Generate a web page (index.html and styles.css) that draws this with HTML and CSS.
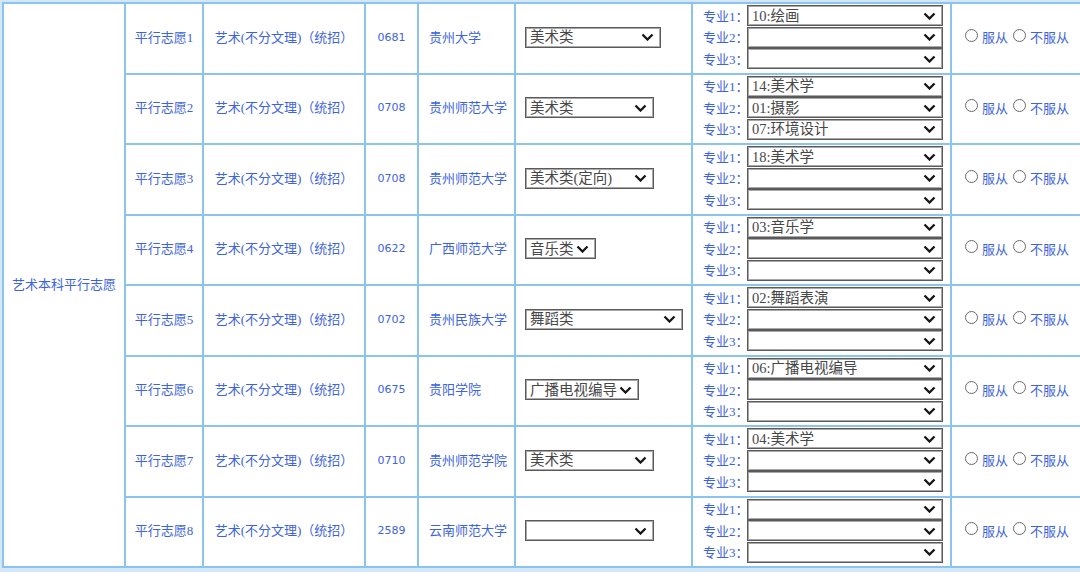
FILE: index.html
```html
<!DOCTYPE html>
<html lang="zh-CN">
<head>
  <meta charset="UTF-8">
  <title>艺术本科平行志愿</title>
  <link rel="stylesheet" href="styles.css">
</head>
<body>

<table class="plan">
  <colgroup>
    <col class="col-batch">
    <col class="col-no">
    <col class="col-type">
    <col class="col-code">
    <col class="col-school">
    <col class="col-prog">
    <col class="col-major">
    <col class="col-obey">
  </colgroup>

  <tr>
    <td rowspan="8" class="center">艺术本科平行志愿</td>
    <td class="center">平行志愿1</td>
    <td class="center">艺术(不分文理)（统招）</td>
    <td class="center code">0681</td>
    <td class="school">贵州大学</td>
    <td class="prog"><span class="sel w135"><select><option>美术类</option></select><svg class="chev" viewBox="0 0 13 8"><path d="M1.5 1.5 6.5 6.5 11.5 1.5"/></svg></span></td>
    <td class="majors">
      <div class="mrow"><span class="lab">专业1：</span><span class="sel major"><select><option>10:绘画</option></select><svg class="chev" viewBox="0 0 13 8"><path d="M1.5 1.5 6.5 6.5 11.5 1.5"/></svg></span></div>
      <div class="mrow"><span class="lab">专业2：</span><span class="sel major"><select><option></option></select><svg class="chev" viewBox="0 0 13 8"><path d="M1.5 1.5 6.5 6.5 11.5 1.5"/></svg></span></div>
      <div class="mrow"><span class="lab">专业3：</span><span class="sel major"><select><option></option></select><svg class="chev" viewBox="0 0 13 8"><path d="M1.5 1.5 6.5 6.5 11.5 1.5"/></svg></span></div>
    </td>
    <td class="obey"><label><input type="radio" name="o1">服从</label><label><input type="radio" name="o1">不服从</label></td>
  </tr>

  <tr>
    <td class="center">平行志愿2</td>
    <td class="center">艺术(不分文理)（统招）</td>
    <td class="center code">0708</td>
    <td class="school">贵州师范大学</td>
    <td class="prog"><span class="sel w128"><select><option>美术类</option></select><svg class="chev" viewBox="0 0 13 8"><path d="M1.5 1.5 6.5 6.5 11.5 1.5"/></svg></span></td>
    <td class="majors">
      <div class="mrow"><span class="lab">专业1：</span><span class="sel major"><select><option>14:美术学</option></select><svg class="chev" viewBox="0 0 13 8"><path d="M1.5 1.5 6.5 6.5 11.5 1.5"/></svg></span></div>
      <div class="mrow"><span class="lab">专业2：</span><span class="sel major"><select><option>01:摄影</option></select><svg class="chev" viewBox="0 0 13 8"><path d="M1.5 1.5 6.5 6.5 11.5 1.5"/></svg></span></div>
      <div class="mrow"><span class="lab">专业3：</span><span class="sel major"><select><option>07:环境设计</option></select><svg class="chev" viewBox="0 0 13 8"><path d="M1.5 1.5 6.5 6.5 11.5 1.5"/></svg></span></div>
    </td>
    <td class="obey"><label><input type="radio" name="o2">服从</label><label><input type="radio" name="o2">不服从</label></td>
  </tr>

  <tr>
    <td class="center">平行志愿3</td>
    <td class="center">艺术(不分文理)（统招）</td>
    <td class="center code">0708</td>
    <td class="school">贵州师范大学</td>
    <td class="prog"><span class="sel w128"><select><option>美术类(定向)</option></select><svg class="chev" viewBox="0 0 13 8"><path d="M1.5 1.5 6.5 6.5 11.5 1.5"/></svg></span></td>
    <td class="majors">
      <div class="mrow"><span class="lab">专业1：</span><span class="sel major"><select><option>18:美术学</option></select><svg class="chev" viewBox="0 0 13 8"><path d="M1.5 1.5 6.5 6.5 11.5 1.5"/></svg></span></div>
      <div class="mrow"><span class="lab">专业2：</span><span class="sel major"><select><option></option></select><svg class="chev" viewBox="0 0 13 8"><path d="M1.5 1.5 6.5 6.5 11.5 1.5"/></svg></span></div>
      <div class="mrow"><span class="lab">专业3：</span><span class="sel major"><select><option></option></select><svg class="chev" viewBox="0 0 13 8"><path d="M1.5 1.5 6.5 6.5 11.5 1.5"/></svg></span></div>
    </td>
    <td class="obey"><label><input type="radio" name="o3">服从</label><label><input type="radio" name="o3">不服从</label></td>
  </tr>

  <tr>
    <td class="center">平行志愿4</td>
    <td class="center">艺术(不分文理)（统招）</td>
    <td class="center code">0622</td>
    <td class="school">广西师范大学</td>
    <td class="prog"><span class="sel w70"><select><option>音乐类</option></select><svg class="chev" viewBox="0 0 13 8"><path d="M1.5 1.5 6.5 6.5 11.5 1.5"/></svg></span></td>
    <td class="majors">
      <div class="mrow"><span class="lab">专业1：</span><span class="sel major"><select><option>03:音乐学</option></select><svg class="chev" viewBox="0 0 13 8"><path d="M1.5 1.5 6.5 6.5 11.5 1.5"/></svg></span></div>
      <div class="mrow"><span class="lab">专业2：</span><span class="sel major"><select><option></option></select><svg class="chev" viewBox="0 0 13 8"><path d="M1.5 1.5 6.5 6.5 11.5 1.5"/></svg></span></div>
      <div class="mrow"><span class="lab">专业3：</span><span class="sel major"><select><option></option></select><svg class="chev" viewBox="0 0 13 8"><path d="M1.5 1.5 6.5 6.5 11.5 1.5"/></svg></span></div>
    </td>
    <td class="obey"><label><input type="radio" name="o4">服从</label><label><input type="radio" name="o4">不服从</label></td>
  </tr>

  <tr>
    <td class="center">平行志愿5</td>
    <td class="center">艺术(不分文理)（统招）</td>
    <td class="center code">0702</td>
    <td class="school">贵州民族大学</td>
    <td class="prog"><span class="sel w157"><select><option>舞蹈类</option></select><svg class="chev" viewBox="0 0 13 8"><path d="M1.5 1.5 6.5 6.5 11.5 1.5"/></svg></span></td>
    <td class="majors">
      <div class="mrow"><span class="lab">专业1：</span><span class="sel major"><select><option>02:舞蹈表演</option></select><svg class="chev" viewBox="0 0 13 8"><path d="M1.5 1.5 6.5 6.5 11.5 1.5"/></svg></span></div>
      <div class="mrow"><span class="lab">专业2：</span><span class="sel major"><select><option></option></select><svg class="chev" viewBox="0 0 13 8"><path d="M1.5 1.5 6.5 6.5 11.5 1.5"/></svg></span></div>
      <div class="mrow"><span class="lab">专业3：</span><span class="sel major"><select><option></option></select><svg class="chev" viewBox="0 0 13 8"><path d="M1.5 1.5 6.5 6.5 11.5 1.5"/></svg></span></div>
    </td>
    <td class="obey"><label><input type="radio" name="o5">服从</label><label><input type="radio" name="o5">不服从</label></td>
  </tr>

  <tr>
    <td class="center">平行志愿6</td>
    <td class="center">艺术(不分文理)（统招）</td>
    <td class="center code">0675</td>
    <td class="school">贵阳学院</td>
    <td class="prog"><span class="sel w113"><select><option>广播电视编导</option></select><svg class="chev" viewBox="0 0 13 8"><path d="M1.5 1.5 6.5 6.5 11.5 1.5"/></svg></span></td>
    <td class="majors">
      <div class="mrow"><span class="lab">专业1：</span><span class="sel major"><select><option>06:广播电视编导</option></select><svg class="chev" viewBox="0 0 13 8"><path d="M1.5 1.5 6.5 6.5 11.5 1.5"/></svg></span></div>
      <div class="mrow"><span class="lab">专业2：</span><span class="sel major"><select><option></option></select><svg class="chev" viewBox="0 0 13 8"><path d="M1.5 1.5 6.5 6.5 11.5 1.5"/></svg></span></div>
      <div class="mrow"><span class="lab">专业3：</span><span class="sel major"><select><option></option></select><svg class="chev" viewBox="0 0 13 8"><path d="M1.5 1.5 6.5 6.5 11.5 1.5"/></svg></span></div>
    </td>
    <td class="obey"><label><input type="radio" name="o6">服从</label><label><input type="radio" name="o6">不服从</label></td>
  </tr>

  <tr>
    <td class="center">平行志愿7</td>
    <td class="center">艺术(不分文理)（统招）</td>
    <td class="center code">0710</td>
    <td class="school">贵州师范学院</td>
    <td class="prog"><span class="sel w128"><select><option>美术类</option></select><svg class="chev" viewBox="0 0 13 8"><path d="M1.5 1.5 6.5 6.5 11.5 1.5"/></svg></span></td>
    <td class="majors">
      <div class="mrow"><span class="lab">专业1：</span><span class="sel major"><select><option>04:美术学</option></select><svg class="chev" viewBox="0 0 13 8"><path d="M1.5 1.5 6.5 6.5 11.5 1.5"/></svg></span></div>
      <div class="mrow"><span class="lab">专业2：</span><span class="sel major"><select><option></option></select><svg class="chev" viewBox="0 0 13 8"><path d="M1.5 1.5 6.5 6.5 11.5 1.5"/></svg></span></div>
      <div class="mrow"><span class="lab">专业3：</span><span class="sel major"><select><option></option></select><svg class="chev" viewBox="0 0 13 8"><path d="M1.5 1.5 6.5 6.5 11.5 1.5"/></svg></span></div>
    </td>
    <td class="obey"><label><input type="radio" name="o7">服从</label><label><input type="radio" name="o7">不服从</label></td>
  </tr>

  <tr>
    <td class="center">平行志愿8</td>
    <td class="center">艺术(不分文理)（统招）</td>
    <td class="center code">2589</td>
    <td class="school">云南师范大学</td>
    <td class="prog"><span class="sel w128"><select><option></option></select><svg class="chev" viewBox="0 0 13 8"><path d="M1.5 1.5 6.5 6.5 11.5 1.5"/></svg></span></td>
    <td class="majors">
      <div class="mrow"><span class="lab">专业1：</span><span class="sel major"><select><option></option></select><svg class="chev" viewBox="0 0 13 8"><path d="M1.5 1.5 6.5 6.5 11.5 1.5"/></svg></span></div>
      <div class="mrow"><span class="lab">专业2：</span><span class="sel major"><select><option></option></select><svg class="chev" viewBox="0 0 13 8"><path d="M1.5 1.5 6.5 6.5 11.5 1.5"/></svg></span></div>
      <div class="mrow"><span class="lab">专业3：</span><span class="sel major"><select><option></option></select><svg class="chev" viewBox="0 0 13 8"><path d="M1.5 1.5 6.5 6.5 11.5 1.5"/></svg></span></div>
    </td>
    <td class="obey"><label><input type="radio" name="o8">服从</label><label><input type="radio" name="o8">不服从</label></td>
  </tr>
</table>

</body>
</html>
```

FILE: styles.css
```css
html, body {
  margin: 0;
  padding: 0;
  overflow: hidden;
  background: #d4e7f8;
  font-family: "Liberation Serif", "Noto Sans CJK SC", serif;
  font-size: 13px;
  color: #3d63dd;
}
.plan {
  border-collapse: collapse;
  table-layout: fixed;
  width: 1220px;
  margin: 2px 0 0 2px;
  background: #fff;
}
.plan tr {
  height: 70.5px;
}
.plan td {
  border: 2px solid #8cc4f0;
  padding: 0 0 4px 0;
  vertical-align: middle;
  white-space: nowrap;
}
.col-batch { width: 122px; }
.col-no { width: 78px; }
.col-type { width: 162px; }
.col-code { width: 53px; }
.col-school { width: 97px; }
.col-prog { width: 177px; }
.col-major { width: 259px; }
.col-obey { width: 272px; }

.center {
  text-align: center;
}
.code {
  font-family: "DejaVu Sans", sans-serif;
  font-size: 11px;
  padding-bottom: 2px !important;
}
.school {
  padding-left: 10px !important;
}
.prog {
  padding-left: 9px !important;
  padding-bottom: 2px !important;
}

/* select boxes */
.sel {
  display: inline-flex;
  align-items: center;
  box-sizing: border-box;
  height: 21px;
  border: 1px solid #5a5a5a;
  box-shadow: inset 0 0 0 1px #a8a8a8;
  background: #fff;
  vertical-align: middle;
}
.sel select {
  appearance: none;
  -webkit-appearance: none;
  flex: 1;
  min-width: 0;
  height: 100%;
  border: none;
  background: transparent;
  padding: 0 0 0 4px;
  font-family: "Liberation Serif", "Noto Sans CJK SC", serif;
  font-size: 14.5px;
  color: #474747;
  outline: none;
}
.chev {
  width: 13px;
  height: 8px;
  margin-right: 6px;
  flex: none;
}
.chev path {
  fill: none;
  stroke: #151515;
  stroke-width: 2.3;
}
.w135 { width: 136px; }
.w128 { width: 129px; }
.w70 { width: 71px; }
.w157 { width: 158px; }
.w113 { width: 114px; }

.majors {
  padding-left: 10px !important;
  padding-bottom: 2px !important;
}
.mrow {
  display: flex;
  align-items: center;
  height: 21.3px;
}
.lab {
  width: 44px;
  flex: none;
  padding-bottom: 1px;
}
.major {
  width: 196px;
}

.obey {
  padding-left: 13px !important;
  padding-bottom: 3px !important;
}
.obey label {
  display: inline-flex;
  align-items: center;
  margin-right: 5px;
}
.obey input {
  appearance: none;
  -webkit-appearance: none;
  width: 13px;
  height: 13px;
  margin: 0 4px 3px 0;
  border: 1.5px solid #6a6a6a;
  border-radius: 50%;
  background: #fff;
  box-sizing: border-box;
}
```
